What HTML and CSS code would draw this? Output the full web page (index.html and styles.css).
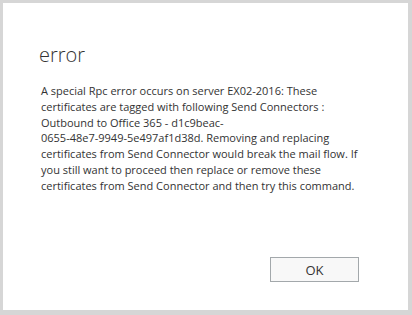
FILE: index.html
```html
<!DOCTYPE html>
<html>
<head>
<meta charset="utf-8">
<link rel="stylesheet" href="styles.css">
</head>
<body>
<div class="dialog">
  <h1 class="title">error</h1>
  <p class="message">A special Rpc error occurs on server EX02-2016: These certificates are tagged with following Send Connectors : Outbound to Office 365 - d1c9beac-<span class="id">0655-48e7-9949-5e497af1d38d.</span> Removing and replacing certificates from Send Connector would break the mail flow. If you still want to proceed then replace or remove these certificates from Send Connector and then try this command.</p>
  <div class="actions">
    <button class="btn">OK</button>
  </div>
</div>
</body>
</html>
```
FILE: styles.css
```css
html, body {
  margin: 0;
  height: 100%;
}
body {
  background: #d6d6d6;
  padding: 3px 4px 5px 3px;
  box-sizing: border-box;
  font-family: "Open Sans", "Noto Sans", sans-serif;
  color: #333333;
}
.dialog {
  background: #ffffff;
  height: 100%;
  box-sizing: border-box;
  padding: 40px 49px 0 36px;
  display: flex;
  flex-direction: column;
}
.title {
  margin: 0;
  font-size: 20px;
  font-weight: 300;
  line-height: 24px;
  color: #333;
}
.message {
  margin: 16px 0 0 2px;
  font-size: 11px;
  line-height: 15.8px;
  width: 332px;
}
.id {
  white-space: nowrap;
}
.actions {
  margin-top: auto;
  margin-bottom: 28px;
  display: flex;
  justify-content: flex-end;
}
.btn {
  width: 89px;
  height: 25px;
  border: 1px solid #a3a8ab;
  background: #f8f8f8;
  font-family: inherit;
  font-size: 13px;
  color: #333;
  padding: 0;
}
```
